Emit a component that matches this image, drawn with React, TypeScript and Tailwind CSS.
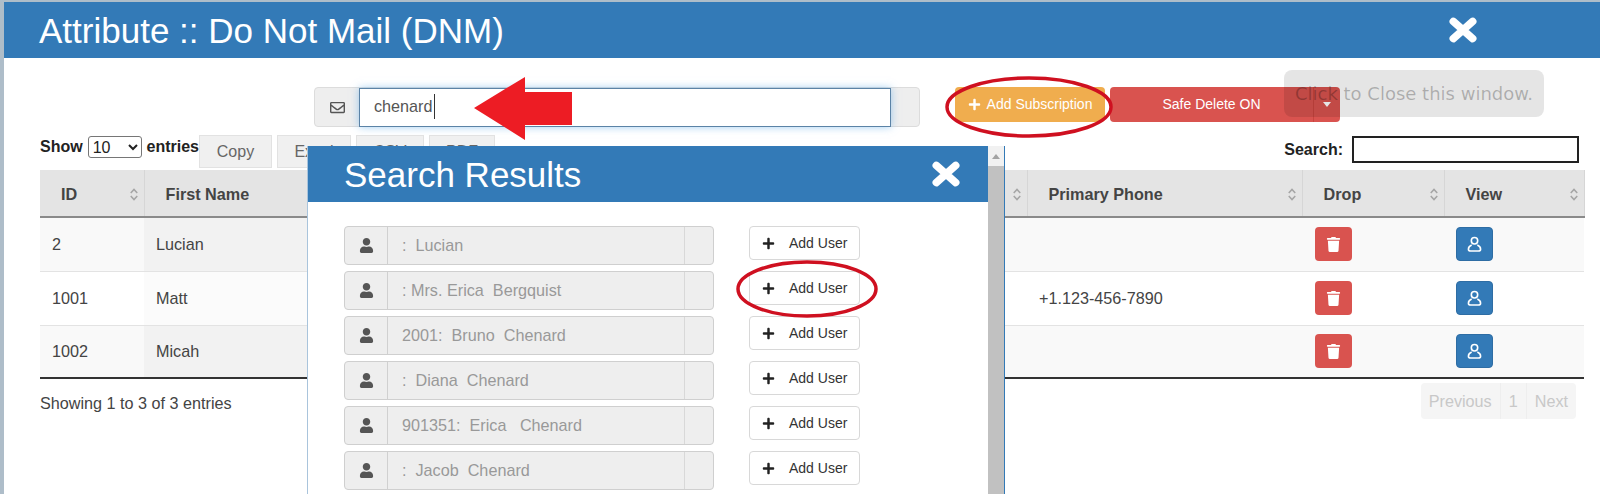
import { FaPlus, FaRegEnvelope, FaTrash, FaUser } from "react-icons/fa";

const FONT = "font-['Liberation_Sans',Arial,sans-serif]";

function CloseX({ className }: { className: string }) {
  return (
    <svg viewBox="0 0 26 24" className={className}>
      <path d="M4 4 L22 20 M22 4 L4 20" stroke="white" strokeWidth="7" strokeLinecap="round" fill="none" />
    </svg>
  );
}

function SortIcon() {
  return (
    <svg viewBox="0 0 10 14" className="w-[10px] h-[13px] shrink-0">
      <path d="M1.5 5.5 L5 1.5 L8.5 5.5" stroke="#a5a5a5" strokeWidth="1.6" fill="none" />
      <path d="M1.5 8.5 L5 12.5 L8.5 8.5" stroke="#a5a5a5" strokeWidth="1.6" fill="none" />
    </svg>
  );
}

function OutlineUser() {
  return (
    <svg viewBox="0 0 16 18" className="w-[15px] h-[17px]" fill="none" stroke="white" strokeWidth="1.7">
      <circle cx="8" cy="5" r="3.4" />
      <path d="M5 9.5 C2.5 10.5 1.5 12 1.5 14 C1.5 15.5 2.5 16 4 16 H12 C13.5 16 14.5 15.5 14.5 14 C14.5 12 13.5 10.5 11 9.5" />
    </svg>
  );
}

function Th({ label }: { label: string }) {
  return (
    <th className="bg-[#e4e4e4] border-r border-[#d6d6d6] border-b-2 border-b-[#8a8a8a] p-0 font-bold text-[#444] text-left">
      <div className="flex items-center justify-between pr-[5px] pl-[21px] pt-[3px]">
        <span>{label}</span>
        <SortIcon />
      </div>
    </th>
  );
}

function DataRow({ id, name, phone, odd, h }: { id: string; name: string; phone: string; odd: boolean; h: string }) {
  const bg = odd ? "bg-[#f9f9f9]" : "bg-white";
  const sorted = odd ? "bg-[#f2f2f2]" : "bg-[#fbfbfb]";
  return (
    <tr className={`${h} border-b border-[#e3e3e3] last:border-b-2 last:border-b-[#333]`}>
      <td className={`${bg} pl-[12px]`}>{id}</td>
      <td className={`${sorted} pl-[12px]`}>{name}</td>
      <td className={bg}></td>
      <td className={`${bg} pl-[12px]`}>{phone}</td>
      <td className={`${bg} pl-[13px]`}>
        <div className="w-[37px] h-[34px] rounded bg-[#d9534f] flex items-center justify-center text-white">
          <FaTrash size={15} />
        </div>
      </td>
      <td className={`${bg} pl-[12px]`}>
        <div className="w-[37px] h-[34px] rounded bg-[#337ab7] border border-[#2e6da4] flex items-center justify-center">
          <OutlineUser />
        </div>
      </td>
    </tr>
  );
}

function ResultRow({ text }: { text: string }) {
  return (
    <div className="flex items-start">
      <div className="w-[370px] h-[39px] flex rounded border border-[#cfcfcf] bg-[#eeeeee]">
        <div className="w-[43px] shrink-0 border-r border-[#d0d0d0] flex items-center justify-center text-[#555]">
          <FaUser size={15} />
        </div>
        <div className="flex-1 pl-[14px] flex items-center text-[#999] whitespace-pre">{text}</div>
        <div className="w-[29px] shrink-0 border-l border-[#d8d8d8]"></div>
      </div>
      <div className="ml-[35px] w-[111px] h-[34px] rounded border border-[#d8d8d8] bg-white flex items-center pl-[12px] text-[14px] text-[#333]">
        <FaPlus size={13} className="text-[#222]" />
        <span className="ml-[14px]">Add User</span>
      </div>
    </div>
  );
}

export default function App() {
  const results = [
    ":  Lucian",
    ": Mrs. Erica  Bergquist",
    "2001:  Bruno  Chenard",
    ":  Diana  Chenard",
    "901351:  Erica   Chenard",
    ":  Jacob  Chenard",
  ];

  return (
    <div className={`${FONT} relative w-[1600px] h-[494px] overflow-hidden bg-[#aebdc9] pt-[2px] pl-[4px] text-[16.2px] text-[#444]`}>
      <div className="h-full bg-white">
        <div className="h-[56px] bg-[#337ab7] flex items-center justify-between pl-[35px] pr-[123px]">
          <h1 className="text-[35px] text-white pt-[3px]">Attribute :: Do Not Mail (DNM)</h1>
          <CloseX className="w-[28px] h-[26px]" />
        </div>

        <div className="pl-[36px] w-[1580px]">
          <div className="mt-[29px] h-[40px] flex items-start pl-[274px]">
            <div className="w-[606px] h-[40px] flex rounded border border-[#dcdcdc] bg-[#eeeeee]">
              <div className="w-[44px] flex items-center justify-center text-[#555]">
                <FaRegEnvelope size={15} />
              </div>
              <div className="w-[532px] h-[39px] bg-white border border-[#5b83a6] shadow-[0_0_8px_rgba(102,175,233,0.6)] pl-[14px] pb-[2px] flex items-center text-[#555]">
                <span className="border-r border-[#333] pr-px">chenard</span>
              </div>
            </div>
            <div className="ml-[35px] w-[150px] h-[35px] rounded bg-[#f0ad4e] flex items-center justify-center gap-[6px] text-[14px] text-white">
              <FaPlus size={13} />
              <span>Add Subscription</span>
            </div>
            <div className="ml-[5px] w-[230px] h-[35px] rounded bg-[#d9534f] flex text-[14px] text-white">
              <div className="flex-1 flex items-center justify-center">Safe Delete ON</div>
              <div className="w-[27px] border-l border-[#c9443f] flex items-center justify-center">
                <span className="w-0 h-0 border-x-[4px] border-x-transparent border-t-[5px] border-t-white"></span>
              </div>
            </div>
          </div>

          <div className="mt-[8px] h-[35px] flex items-start">
            <label className="w-[159px] shrink-0 h-[22px] mt-[1px] flex items-center font-bold text-[16px] text-[#222] whitespace-nowrap">
              Show
              <select className="ml-[5px] mr-[5px] w-[54px] h-[22px] border border-[#767676] rounded-[3px] bg-white text-[#222] font-normal">
                <option>10</option>
              </select>
              <span>entries</span>
            </label>
            <div className="flex gap-[5px] text-[16px] text-[#666]">
              {[["Copy", "w-[73px]"], ["Excel", "w-[74px]"], ["CSV", "w-[68px]"], ["PDF", "w-[66px]"]].map(([t, w]) => (
                <div key={t} className={`${w} h-[33px] bg-[#f0f0f0] border border-[#e2e2e2] flex items-center justify-center`}>{t}</div>
              ))}
            </div>
            <label className="ml-auto pr-[5px] flex items-center font-bold text-[16px] text-[#222] mt-[1px]">
              Search:
              <input className="ml-[9px] w-[227px] h-[27px] border-2 border-[#222] bg-white" />
            </label>
          </div>

          <table className="w-[1544px] table-fixed border-collapse">
            <colgroup>
              <col className="w-[104px]" />
              <col className="w-[440px]" />
              <col className="w-[443px]" />
              <col className="w-[275px]" />
              <col className="w-[142px]" />
              <col className="w-[140px]" />
            </colgroup>
            <thead>
              <tr className="h-[47px]">
                <Th label="ID" />
                <Th label="First Name" />
                <Th label="" />
                <Th label="Primary Phone" />
                <Th label="Drop" />
                <Th label="View" />
              </tr>
            </thead>
            <tbody>
              <DataRow id="2" name="Lucian" phone="" odd h="h-[54px]" />
              <DataRow id="1001" name="Matt" phone="+1.123-456-7890" odd={false} h="h-[54px]" />
              <DataRow id="1002" name="Micah" phone="" odd h="h-[53px]" />
            </tbody>
          </table>

          <div className="flex items-start justify-between pr-[8px] pt-[4px]">
            <div className="mt-[8px] text-[#444]">Showing 1 to 3 of 3 entries</div>
            <div className="h-[36px] flex bg-[#f5f5f5] rounded-sm text-[#c8c8c8] divide-x divide-[#eeeeee]">
              <div className="px-[8px] flex items-center">Previous</div>
              <div className="px-[8px] flex items-center">1</div>
              <div className="px-[8px] flex items-center">Next</div>
            </div>
          </div>
        </div>
      </div>

      {/* search results dialog */}
      <div className="absolute left-[307px] top-[146px] w-[698px] h-[360px] bg-white border-l border-r border-l-[#a9c4dc] border-r-[#337ab7] flex">
        <div className="flex-1">
          <div className="h-[56px] bg-[#337ab7] flex items-center justify-between pl-[36px] pr-[28px]">
            <h2 className="text-[35px] text-white pt-[3px]">Search Results</h2>
            <CloseX className="w-[28px] h-[26px]" />
          </div>
          <div className="pt-[24px] pl-[36px] flex flex-col gap-[6px]">
            {results.map((r) => (
              <ResultRow key={r} text={r} />
            ))}
          </div>
        </div>
        <div className="w-[16px] bg-[#f1f1f1] flex flex-col items-center">
          <div className="h-[20px] flex items-center">
            <span className="w-0 h-0 border-x-[4px] border-x-transparent border-b-[5px] border-b-[#a3a3a3]"></span>
          </div>
          <div className="flex-1 w-full bg-[#c1c1c1]"></div>
        </div>
      </div>

      {/* tooltip */}
      <div className="absolute left-[1284px] top-[70px] w-[260px] h-[47px] rounded-lg bg-black/10 flex items-center justify-center font-['DejaVu_Sans',sans-serif] text-[18px] text-black/25 whitespace-nowrap">
        Click to Close this window.
      </div>

      {/* annotations */}
      <svg viewBox="0 0 100 64" className="absolute left-[473px] top-[77px] w-[100px] h-[64px]">
        <path d="M1 31 L52 0 L52 15 L99 15 L99 48 L52 48 L52 63 Z" fill="#ed1c24" />
      </svg>
      <svg viewBox="0 0 168 62" className="absolute left-[945px] top-[76px] w-[168px] h-[62px]" fill="none">
        <ellipse cx="84" cy="31" rx="82" ry="29" stroke="#cf1020" strokeWidth="3.5" />
      </svg>
      <svg viewBox="0 0 142 58" className="absolute left-[736px] top-[260px] w-[142px] h-[58px]" fill="none">
        <ellipse cx="71" cy="29" rx="69" ry="27" stroke="#cf1020" strokeWidth="3.5" />
      </svg>
    </div>
  );
}
